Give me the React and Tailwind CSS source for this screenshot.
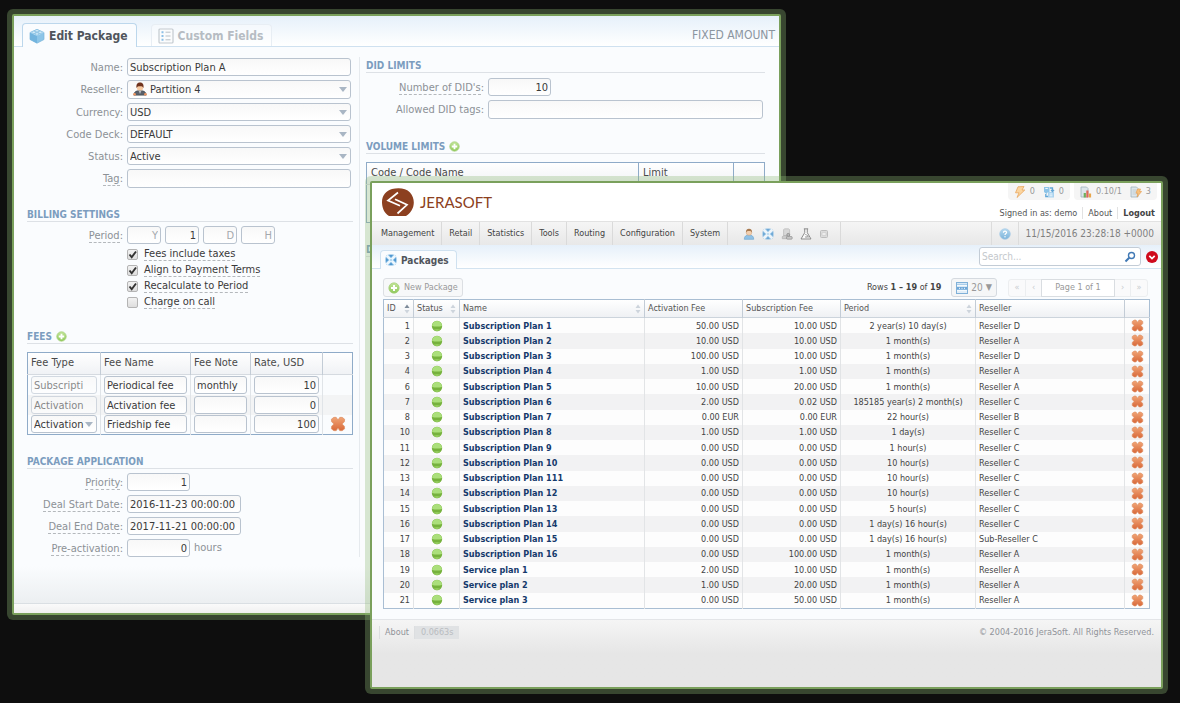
import { useState } from 'react'
import clsx from 'clsx'

const packages = [
  [1, 'Subscription Plan 1', '50.00 USD', '10.00 USD', '2 year(s) 10 day(s)', 'Reseller D'],
  [2, 'Subscription Plan 2', '10.00 USD', '10.00 USD', '1 month(s)', 'Reseller A'],
  [3, 'Subscription Plan 3', '100.00 USD', '10.00 USD', '1 month(s)', 'Reseller D'],
  [4, 'Subscription Plan 4', '1.00 USD', '1.00 USD', '1 month(s)', 'Reseller A'],
  [6, 'Subscription Plan 5', '10.00 USD', '20.00 USD', '1 month(s)', 'Reseller A'],
  [7, 'Subscription Plan 6', '2.00 USD', '0.02 USD', '185185 year(s) 2 month(s)', 'Reseller C'],
  [8, 'Subscription Plan 7', '0.00 EUR', '0.00 EUR', '22 hour(s)', 'Reseller B'],
  [10, 'Subscription Plan 8', '1.00 USD', '1.00 USD', '1 day(s)', 'Reseller C'],
  [11, 'Subscription Plan 9', '0.00 USD', '0.00 USD', '1 hour(s)', 'Reseller C'],
  [12, 'Subscription Plan 10', '0.00 USD', '0.00 USD', '10 hour(s)', 'Reseller C'],
  [13, 'Subscription Plan 111', '0.00 USD', '0.00 USD', '10 hour(s)', 'Reseller C'],
  [14, 'Subscription Plan 12', '0.00 USD', '0.00 USD', '10 hour(s)', 'Reseller C'],
  [15, 'Subscription Plan 13', '0.00 USD', '0.00 USD', '5 hour(s)', 'Reseller C'],
  [16, 'Subscription Plan 14', '0.00 USD', '0.00 USD', '1 day(s) 16 hour(s)', 'Reseller C'],
  [17, 'Subscription Plan 15', '0.00 USD', '0.00 USD', '1 day(s) 16 hour(s)', 'Sub-Reseller C'],
  [18, 'Subscription Plan 16', '0.00 USD', '100.00 USD', '1 month(s)', 'Reseller A'],
  [19, 'Service plan 1', '2.00 USD', '10.00 USD', '1 month(s)', 'Reseller A'],
  [20, 'Service plan 2', '1.00 USD', '20.00 USD', '1 month(s)', 'Reseller A'],
  [21, 'Service plan 3', '0.00 USD', '50.00 USD', '1 month(s)', 'Reseller A'],
]

const menu = ['Management', 'Retail', 'Statistics', 'Tools', 'Routing', 'Configuration', 'System']

/* ---------- icons ---------- */

// gradients shared by all the icons
function IconDefs() {
  return (
    <svg className="absolute h-0 w-0" aria-hidden="true">
      <defs>
        <linearGradient id="orange" x1="0" y1="0" x2="0" y2="1">
          <stop offset="0" stopColor="#f0a475" />
          <stop offset="1" stopColor="#d9693a" />
        </linearGradient>
        <linearGradient id="lime" x1="0" y1="0" x2="0" y2="1">
          <stop offset="0" stopColor="#c3e59a" />
          <stop offset="1" stopColor="#8fc95a" />
        </linearGradient>
        <linearGradient id="sky" x1="0" y1="0" x2="0" y2="1">
          <stop offset="0" stopColor="#b4d9f0" />
          <stop offset="1" stopColor="#7db4da" />
        </linearGradient>
      </defs>
    </svg>
  )
}

function DeleteIcon({ className }) {
  return (
    <svg viewBox="0 0 14 14" className={className}>
      <path
        d="M3.4 1.2 5.4 1.200 7 3.600 8.600 1.200 10.600 1.200 12.800 2.800 12.600 5 10.600 7 12.600 9 12.800 11.200 10.600 12.800 8.600 12.800 7 10.600 5.400 12.800 3.400 12.800 1.200 11.200 1.400 9 3.400 7 1.400 5 1.200 2.800Z"
        fill="url(#orange)"
        stroke="#e0946b"
        strokeWidth="0.7"
        strokeLinejoin="round"
      />
    </svg>
  )
}

function PlusIcon({ className }) {
  return (
    <svg viewBox="0 0 12 12" className={className}>
      <circle cx="6" cy="6" r="5.2" fill="url(#lime)" stroke="#a3cf77" strokeWidth="0.7" />
      <path d="M6 3v6M3 6h6" stroke="#fff" strokeWidth="2" />
    </svg>
  )
}

function BrickIcon({ className }) {
  return (
    <svg viewBox="0 0 16 16" className={className}>
      <path d="M1 4.500 8 1.500l7 3v7L8 15.200 1 11.500Z" fill="#8cc5e8" stroke="#7ab4da" strokeWidth="0.7" />
      <path d="M1 4.500 8 8v7.200L1 11.500Z" fill="#72b4de" />
      <path d="M1 4.500 8 1.500l7 3L8 8Z" fill="#b5dcf3" />
      <ellipse cx="4.800" cy="4.300" rx="1.900" ry="1.200" fill="#d4ecf9" stroke="#77b5dc" strokeWidth="0.6" />
      <ellipse cx="8" cy="2.700" rx="1.900" ry="1.200" fill="#d4ecf9" stroke="#77b5dc" strokeWidth="0.6" />
      <ellipse cx="11.200" cy="4.300" rx="1.900" ry="1.200" fill="#d4ecf9" stroke="#77b5dc" strokeWidth="0.6" />
      <ellipse cx="8" cy="5.900" rx="1.900" ry="1.200" fill="#d4ecf9" stroke="#77b5dc" strokeWidth="0.6" />
    </svg>
  )
}

function ListIcon({ className }) {
  return (
    <svg viewBox="0 0 16 16" className={className}>
      <rect x="1" y="1" width="14" height="14" rx="1" fill="#fbfcfd" stroke="#c4cad0" strokeWidth="1.2" />
      <path d="M3.5 4.2h2M3.5 8h2M3.5 11.8h2" stroke="#8dbfe6" strokeWidth="2" />
      <path d="M7.5 4.2h5M7.5 8h5M7.5 11.8h5" stroke="#b9c0c7" strokeWidth="1" />
    </svg>
  )
}

function ManagerIcon({ className }) {
  return (
    <svg viewBox="0 0 14 14" className={className}>
      <path d="M.8 13.2C.8 10 3 8.6 7 8.6s6.2 1.4 6.2 4.6Z" fill="#59606a" stroke="#3c424b" strokeWidth="0.5" />
      <path d="M5.6 8.8 7 12l1.4-3.2Z" fill="#b9bec4" />
      <circle cx="1.6" cy="12.3" r="1.3" fill="#ee9560" />
      <circle cx="12.4" cy="12.3" r="1.3" fill="#ee9560" />
      <circle cx="7" cy="5.4" r="3.2" fill="#f5c9a2" />
      <path d="M3.500 6C3 2.400 4.600.600 7 .600s4 1.800 3.500 5.400C9.800 4.600 9 4.200 7 4.200s-2.800.400-3.500 1.800Z" fill="#70331d" />
    </svg>
  )
}

function UserIcon({ className }) {
  return (
    <svg viewBox="0 0 14 14" className={className}>
      <path d="M1.500 13.200C1.500 9.600 3.500 8.200 7 8.200s5.500 1.400 5.500 5Z" fill="#8fc1e6" stroke="#6fa8d2" strokeWidth="0.8" />
      <circle cx="7" cy="5.200" r="3.300" fill="#f3cfae" stroke="#c79b74" strokeWidth="0.500" />
      <path d="M3.500 5.400C3.200 2.400 4.600.800 7 .800s3.800 1.600 3.500 4.600C9.600 3.800 8.800 3.500 7 3.500s-2.600.300-3.500 1.900Z" fill="#a8794f" />
    </svg>
  )
}

function PackageIcon({ className }) {
  return (
    <svg viewBox="0 0 14 14" className={className}>
      <rect x="0.800" y="0.800" width="12.400" height="12.400" rx="4.500" fill="#8fc3e9" stroke="#8bbce0" strokeWidth="0.7" />
      <path d="m2 2 10 10M12 2 2 12" stroke="#eef7fd" strokeWidth="3" />
      <path d="M4.800 1.200h4.400L7 4.200ZM4.800 12.800h4.400L7 9.800ZM1.200 4.800v4.400L4.200 7ZM12.800 4.800v4.400L9.800 7Z" fill="#4f97cf" />
      <circle cx="7" cy="7" r="1.500" fill="#b5d9f2" />
    </svg>
  )
}

function ServerIcon({ className }) {
  return (
    <svg viewBox="0 0 14 14" className={className}>
      <path d="M4 1h5l1 1v7H3V2Z" fill="#d8d8d8" stroke="#b0b0b0" strokeWidth="0.7" />
      <path d="M1.500 12.500V10l2-1h3v3.500Z" fill="#cdcdcd" stroke="#a8a8a8" strokeWidth="0.7" />
      <circle cx="8.500" cy="8" r="1.700" fill="#bbb" stroke="#8b8b8b" />
      <rect x="6.500" y="10" width="6.500" height="3" rx="0.800" fill="#c9c9c9" stroke="#8b8b8b" strokeWidth="0.8" />
    </svg>
  )
}

function FlaskIcon({ className }) {
  return (
    <svg viewBox="0 0 14 14" className={className}>
      <path d="M4.500 1h5M5.500 1v4.500L1.200 12.800h11.600L8.500 5.500V1" fill="#fafafa" stroke="#7c7c7c" />
      <path d="m6.500 7 1 1.500M6 10.500h3M8.500 8.500l1.500 2.500" stroke="#777" />
    </svg>
  )
}

function BoxIcon({ className }) {
  return (
    <svg viewBox="0 0 10 10" className={className}>
      <rect x="1.500" y="1.500" width="7" height="7" rx="1" fill="#dcdcdc" stroke="#bdbdbd" />
      <rect x="3" y="4" width="4" height="2" fill="#fff" stroke="#c2c2c2" strokeWidth="0.6" />
    </svg>
  )
}

function BoltIcon({ className }) {
  return (
    <svg viewBox="0 0 12 12" className={className}>
      <path d="M4 .800 10 .500 8 4h2.800L3 11.500 5 6.800H1.500Z" fill="#fbd5a0" stroke="#e8a75e" strokeWidth="0.8" />
    </svg>
  )
}

function SyncIcon({ className }) {
  return (
    <svg viewBox="0 0 12 12" className={className}>
      <path d="M1 1h5.500v5H5L3.500 8 1 6Z" fill="#8dc4e8" />
      <path d="M5 6h6v5.500H5Z" fill="#a9d2ee" />
      <path d="M7 2h2.500v2.500M8 4l1.500 1.500L11 4M5 10.500H2.800V8" fill="none" stroke="#62a6d6" strokeWidth="1.300" />
      <path d="M2.300 2.500h2.500M6.500 8h3M6.500 9.800h3" stroke="#eef7fd" />
    </svg>
  )
}

function ChartIcon({ className }) {
  return (
    <svg viewBox="0 0 12 12" className={className}>
      <path d="M1 11V1h5.500l1.500 1.500V11Z" fill="#dde6ec" stroke="#9fb2bf" strokeWidth="0.8" />
      <path d="M4.800 11.500V7" stroke="#6fae5b" strokeWidth="2.200" />
      <path d="M7.400 11.500V4.500" stroke="#e0685a" strokeWidth="2.200" />
      <path d="M10 11.500V7.500" stroke="#e9a64a" strokeWidth="2.200" />
    </svg>
  )
}

function PageBoltIcon({ className }) {
  return (
    <svg viewBox="0 0 12 12" className={className}>
      <path d="M1 11V1h5.500L8 2.500V11Z" fill="#dde6ec" stroke="#9fb2bf" strokeWidth="0.8" />
      <path d="M2.500 4h4M2.500 6h4M2.500 8h4" stroke="#b3c2cc" strokeWidth="0.7" />
      <path d="M7.500 3h3L9.600 5.500h2L7 11l.8-3.800H6Z" fill="#f8c27e" stroke="#e69b4c" strokeWidth="0.6" />
    </svg>
  )
}

function HelpIcon({ className }) {
  return (
    <svg viewBox="0 0 12 12" className={className}>
      <circle cx="6" cy="6" r="5.300" fill="url(#sky)" stroke="#a9cce6" strokeWidth="0.7" />
      <path d="M4.400 4.700c0-2 3.200-2 3.200-.2C7.600 5.600 6 5.600 6 7" fill="none" stroke="#fff" strokeWidth="1.200" />
      <circle cx="6" cy="8.800" r="0.700" fill="#fff" />
    </svg>
  )
}

function RowsIcon({ className }) {
  return (
    <svg viewBox="0 0 12 12" className={className}>
      <rect x="0.500" y="0.500" width="11" height="11" fill="#f3f9fd" stroke="#7fb0d8" />
      <path d="M1 2.300h10" stroke="#a9cdea" strokeWidth="1.400" />
      <path d="M1 6.300h10" stroke="#6ea7d8" strokeWidth="3" />
      <path d="M3 6.300h1M5.500 6.300h1M8 6.300h1" stroke="#fff" />
      <path d="M1 10h10" stroke="#cfe2f2" />
    </svg>
  )
}

function StatusDot() {
  return (
    <svg viewBox="0 0 12 12" className="mx-auto h-3 w-3">
      <circle cx="6" cy="6" r="5.200" fill="#76b23d" />
      <path d="M1 6a5 5 0 0 1 10 0Q6 7 1 6Z" fill="#abdf7b" />
      <path d="M2.600 9.600a5 5 0 0 0 6.800 0Q6 8.400 2.600 9.600Z" fill="#92cb5b" />
    </svg>
  )
}

function SortArrows({ active }) {
  return (
    <svg viewBox="0 0 6 10" className="h-2.5 w-1.5 shrink-0">
      <path d="M3 .5 5.500 4h-5Z" fill={active ? '#7d8a99' : '#cdd4dc'} />
      <path d="M3 9.500.5 6h5Z" fill="#cdd4dc" />
    </svg>
  )
}

function Logo() {
  return (
    <svg viewBox="0 0 32 28" className="h-7 w-8">
      <path d="M10 1C16-.4 24-.2 28 4.500c4.500 5 5 12.500 1.500 18C28 25 26 27 24 28H7C2 25 0 19.500 0 14 0 7 4.500 2.500 10 1Z" fill="#8c4020" />
      <path d="M16 4.500 6 12.500 18 17.800M13 11.200 25 16.800 15.500 25.500" fill="none" stroke="#fff" strokeWidth="1.700" />
    </svg>
  )
}

/* ---------- form parts ---------- */

const fieldClass =
  'min-w-0 rounded-[3px] border border-[#b9c3cf] bg-linear-to-b from-[#f8f8f8] to-white px-0.5 pt-px text-[11px] text-[#3a3a3a] outline-none placeholder:text-[#a4a9ae]'

function Field({ tall, right, className, ...props }) {
  return (
    <input
      className={clsx(fieldClass, tall ? 'h-[19px]' : 'h-[18px]', right && 'text-right', className)}
      {...props}
    />
  )
}

function Select({ tall, className, icon, children, ...props }) {
  return (
    <span className={clsx('relative flex', className)}>
      {icon}
      <select
        className={clsx(fieldClass, 'w-full appearance-none', tall ? 'h-[19px]' : 'h-[18px]', icon && 'pl-[22px]')}
        {...props}
      >
        {children}
      </select>
      <svg viewBox="0 0 8 5" className="pointer-events-none absolute top-[7px] right-1 h-[5px] w-2">
        <path d="M0 0h8L4 5Z" fill="#a9b6c4" />
      </svg>
    </span>
  )
}

function Row({ id, label, hint, children }) {
  return (
    <div className="col-span-2 grid grid-cols-subgrid items-center">
      <label htmlFor={id} className="pt-px text-right leading-[14px] whitespace-nowrap text-[#8c9196]">
        <span className={clsx(hint && 'border-b border-dashed border-[#b4b8bc]')}>{label}</span>:
      </label>
      <div className="flex items-center gap-1">{children}</div>
    </div>
  )
}

function Heading({ children }) {
  return (
    <h2 className="flex h-4 items-center gap-1 border-b border-[#dde1e6] pt-0.5 text-[10px] font-bold text-[#7c9dbf]">
      {children}
    </h2>
  )
}

function AddButton({ label }) {
  return (
    <button aria-label={label}>
      <PlusIcon className="h-[11px] w-[11px]" />
    </button>
  )
}

function Check({ label, defaultChecked }) {
  return (
    <label className="flex h-4 items-center gap-1.5 text-[#3a3a3a]">
      <span className="relative flex">
        <input
          type="checkbox"
          defaultChecked={defaultChecked}
          className="peer h-[11px] w-[11px] appearance-none rounded-[2px] border border-[#b4b4b4] bg-linear-to-b from-[#f2f2f2] to-[#dedede]"
        />
        <svg viewBox="0 0 11 11" className="pointer-events-none absolute inset-0 hidden h-[11px] w-[11px] peer-checked:block">
          <path d="m2.500 5.500 2.200 2.700L9 2.500" fill="none" stroke="#333" strokeWidth="1.900" />
        </svg>
      </span>
      <span className="border-b border-dashed border-[#b4b8bc] leading-[13px]">{label}</span>
    </label>
  )
}

/* ---------- windows ---------- */

const windowClass =
  'absolute flex flex-col border-2 border-[#7aa05c] bg-[#fafcfe] shadow-[0_0_0_5px_rgba(143,186,118,0.33)]'

function FeesTable() {
  const th = 'border-r border-[#c3ccd6] px-[3px] text-left font-normal'
  const td = 'border-r border-[#e0e4e8] px-[3px]'
  return (
    <table className="mt-2 w-full table-fixed border-collapse border border-[#8fabc8] text-[#4a4a4a]">
      <thead>
        <tr className="h-[22px] border-b border-[#d5dae0] bg-linear-to-b from-white to-[#f0f2f5]">
          <th className={clsx(th, 'w-[73px]')}>Fee Type</th>
          <th className={th}>Fee Name</th>
          <th className={clsx(th, 'w-[60px]')}>Fee Note</th>
          <th className={clsx(th, 'w-[72px]')}>Rate, USD</th>
          <th className="w-[30px]" />
        </tr>
      </thead>
      <tbody>
        {[
          ['Subscripti', 'Periodical fee', 'monthly', '10'],
          ['Activation', 'Activation fee', '', '0'],
          ['Activation', 'Friedship fee', '', '100'],
        ].map(([type, name, note, rate], i) => (
          <tr key={name} className="h-5 even:bg-[#f3f4f5]">
            <td className={td}>
              {i === 2 ? (
                <Select aria-label="Fee type">
                  <option>{type}</option>
                </Select>
              ) : (
                <Field className="block w-full opacity-60" disabled aria-label="Fee type" defaultValue={type} />
              )}
            </td>
            <td className={td}>
              <Field className="block w-full" aria-label="Fee name" defaultValue={name} />
            </td>
            <td className={td}>
              <Field className="block w-full" aria-label="Fee note" defaultValue={note} />
            </td>
            <td className={td}>
              <Field className="block w-full" right aria-label="Rate" defaultValue={rate} />
            </td>
            <td>
              {i === 2 && (
                <button className="mx-auto block" aria-label="Delete fee">
                  <DeleteIcon className="h-4 w-4" />
                </button>
              )}
            </td>
          </tr>
        ))}
      </tbody>
    </table>
  )
}

function EditWindow() {
  return (
    <section className={clsx(windowClass, 'top-3.5 right-[399px] left-3 rounded-[2px] text-[11px]')}>
      <header className="flex h-[31px] items-end border-b border-[#cfe1f0] bg-linear-to-b from-[#e6f0fa] to-white pl-2">
        <a
          href="#edit"
          className="-mb-px flex h-6 items-center gap-1 rounded-t border border-b-0 border-[#bcd7ec] bg-[#fafcfe] pr-2 pl-1.5 text-[12px] font-bold text-[#50555c]"
        >
          <BrickIcon className="h-4 w-4" />
          Edit Package
        </a>
        <a
          href="#custom"
          className="ml-3.5 flex h-[22px] items-center gap-1 rounded-t border border-b-0 border-[#e8eef4] bg-white/40 pr-2 pl-1.5 text-[12px] font-bold text-[#b6bcc3]"
        >
          <ListIcon className="h-4 w-4" />
          Custom Fields
        </a>
        <span className="mr-1 mb-0.5 ml-auto text-[12px] text-[#8b959f]">FIXED AMOUNT</span>
      </header>

      <div className="grid grid-cols-[346px_1fr] pt-2.5">
        <div className="border-r border-[#e6eaee] pr-1.5 pl-[13px]">
          <div className="grid grid-cols-[96px_1fr] gap-1 pt-px pr-0.5">
            <Row id="name" label="Name">
              <Field id="name" className="flex-1" defaultValue="Subscription Plan A" />
            </Row>
            <Row id="reseller" label="Reseller">
              <Select
                id="reseller"
                tall
                className="flex-1"
                icon={<ManagerIcon className="pointer-events-none absolute top-0.5 left-1.5 h-3.5 w-3.5" />}
              >
                <option>Partition 4</option>
              </Select>
            </Row>
            <Row id="currency" label="Currency">
              <Select id="currency" className="flex-1">
                <option>USD</option>
              </Select>
            </Row>
            <Row id="deck" label="Code Deck">
              <Select id="deck" className="flex-1">
                <option>DEFAULT</option>
              </Select>
            </Row>
            <Row id="status" label="Status">
              <Select id="status" className="flex-1">
                <option>Active</option>
              </Select>
            </Row>
            <Row id="tag" label="Tag" hint>
              <Field id="tag" tall className="flex-1" />
            </Row>
          </div>

          <div className="mt-[18px]">
            <Heading>BILLING SETTINGS</Heading>
            <div className="mt-1 grid grid-cols-[96px_1fr] gap-x-1 gap-y-0.5">
              <Row id="years" label="Period" hint>
                <Field id="years" right className="w-[34px]" placeholder="Y" />
                <Field right className="w-[34px]" aria-label="Months" defaultValue="1" />
                <Field right className="w-[34px]" aria-label="Days" placeholder="D" />
                <Field right className="w-[34px]" aria-label="Hours" placeholder="H" />
              </Row>
              <div className="col-start-2">
                <Check label="Fees include taxes" defaultChecked />
                <Check label="Align to Payment Terms" defaultChecked />
                <Check label="Recalculate to Period" defaultChecked />
                <Check label="Charge on call" />
              </div>
            </div>
          </div>

          <div className="mt-[18px]">
            <Heading>
              FEES <AddButton label="Add fee" />
            </Heading>
            <FeesTable />
          </div>

          <div className="mt-[18px]">
            <Heading>PACKAGE APPLICATION</Heading>
            <div className="mt-1 grid grid-cols-[96px_1fr] gap-1">
              <Row id="priority" label="Priority" hint>
                <Field id="priority" right className="w-[63px]" defaultValue="1" />
              </Row>
              <Row id="start" label="Deal Start Date" hint>
                <Field id="start" className="w-[114px]" defaultValue="2016-11-23 00:00:00" />
              </Row>
              <Row id="end" label="Deal End Date" hint>
                <Field id="end" className="w-[114px]" defaultValue="2017-11-21 00:00:00" />
              </Row>
              <Row id="pre" label="Pre-activation" hint>
                <Field id="pre" right className="w-[63px]" defaultValue="0" />
                <span className="text-[#8c9196]">hours</span>
              </Row>
            </div>
          </div>
        </div>

        <div className="pr-3.5 pl-1.5">
          <Heading>DID LIMITS</Heading>
          <div className="mt-[5px] grid grid-cols-[118px_1fr] gap-1 pr-0.5">
            <Row id="dids" label="Number of DID's" hint>
              <Field id="dids" right className="w-[63px]" defaultValue="10" />
            </Row>
            <Row id="tags" label="Allowed DID tags">
              <Field id="tags" tall className="flex-1" />
            </Row>
          </div>
          <div className="mt-[19px]">
            <Heading>
              VOLUME LIMITS <AddButton label="Add volume limit" />
            </Heading>
            <table className="mt-2 w-full table-fixed border-collapse border border-[#8fabc8] text-[#4a4a4a]">
              <thead>
                <tr className="h-[22px] border-b border-[#d5dae0] bg-linear-to-b from-white to-[#f0f2f5]">
                  <th className="border-r border-[#8fabc8] px-1 text-left font-normal">Code / Code Name</th>
                  <th className="w-[95px] border-r border-[#8fabc8] px-1 text-left font-normal">Limit</th>
                  <th className="w-[31px]" />
                </tr>
              </thead>
              <tbody>
                <tr className="h-[38px]">
                  <td colSpan={3} />
                </tr>
              </tbody>
            </table>
          </div>
          <div className="mt-[18px]">
            <Heading>D</Heading>
          </div>
        </div>
      </div>

      <div className="h-[46px] bg-linear-to-b from-[#fafcfe] from-20% to-[#eceff1]" />
      <div className="h-2.5 border-t border-[#dadfe3] bg-linear-to-b from-[#fafafa] to-[#f0f0f0]" />
    </section>
  )
}

function PackagesTable() {
  const th = 'border-r border-[#c3ccd6] px-[3px] text-left font-normal'
  const td = 'border-r border-[#e2e4e6] px-[3px]'
  return (
    <table className="mt-0.5 h-[310px] w-full table-fixed border-collapse border border-[#a9bed3] text-[#444]">
      <thead>
        <tr className="h-[18px] border-b border-[#ccd4dc] bg-linear-to-b from-white to-[#eff1f4] text-[#555]">
          <th className={clsx(th, 'w-[30px]')}>
            <span className="flex items-center justify-between">
              ID <SortArrows active />
            </span>
          </th>
          <th className={clsx(th, 'w-[46px]')}>
            <span className="flex items-center justify-between">
              Status <SortArrows />
            </span>
          </th>
          <th className={th}>
            <span className="flex items-center justify-between">
              Name <SortArrows />
            </span>
          </th>
          <th className={clsx(th, 'w-[98px]')}>Activation Fee</th>
          <th className={clsx(th, 'w-[98px]')}>Subscription Fee</th>
          <th className={clsx(th, 'w-[135px]')}>
            <span className="flex items-center justify-between">
              Period <SortArrows />
            </span>
          </th>
          <th className={clsx(th, 'w-[149px]')}>Reseller</th>
          <th className="w-[25px]" />
        </tr>
      </thead>
      <tbody>
        {packages.map(([id, name, activation, subscription, period, reseller]) => (
          <tr key={id} className="leading-[14px] odd:bg-[#fdfdfd] even:bg-[#f2f2f3]">
            <td className={clsx(td, 'text-right')}>{id}</td>
            <td className={td}>
              <StatusDot />
            </td>
            <td className={td}>
              <a href="#package" className="font-bold text-[#14396b]">
                {name}
              </a>
            </td>
            <td className={clsx(td, 'text-right')}>{activation}</td>
            <td className={clsx(td, 'text-right')}>{subscription}</td>
            <td className={clsx(td, 'text-center')}>{period}</td>
            <td className={td}>{reseller}</td>
            <td>
              <button className="mx-auto block" aria-label="Delete package">
                <DeleteIcon className="h-[13px] w-[13px]" />
              </button>
            </td>
          </tr>
        ))}
      </tbody>
    </table>
  )
}

function PackagesWindow() {
  const [query, setQuery] = useState('')

  return (
    <section className={clsx(windowClass, 'top-[181px] right-[17px] left-[370px] rounded-[2px] text-[9px]')}>
      <header className="flex h-[38px] justify-between bg-white pr-1 pl-2.5">
        <div className="flex items-center gap-1.5">
          <Logo />
          <span className="font-['Lato',sans-serif] text-[15px] text-[#8c4020]">JERASOFT</span>
        </div>
        <div className="flex flex-col items-end text-[#555]">
          <div className="flex gap-1 text-[#999]">
            <span className="flex h-[17px] items-center gap-1 rounded-b bg-[#f5f5f5] px-1.5">
              <BoltIcon className="h-3 w-3" />
              <span className="mr-1">0</span>
              <SyncIcon className="h-3 w-3" />
              <span>0</span>
            </span>
            <span className="flex h-[17px] items-center gap-1 rounded-b bg-[#f5f5f5] px-1.5">
              <ChartIcon className="h-3 w-3" />
              <span className="mr-1">0.10/1</span>
              <PageBoltIcon className="h-3 w-3" />
              <span>3</span>
            </span>
          </div>
          <div className="mt-[7px] mr-0.5 flex items-center leading-3">
            <span className="pr-[5px]">Signed in as: demo</span>
            <a href="#about" className="border-x border-[#e2e2e2] px-[5px]">
              About
            </a>
            <a href="#logout" className="pl-[5px] font-bold text-[#444]">
              Logout
            </a>
          </div>
        </div>
      </header>

      <nav className="flex h-6 items-stretch border-t border-[#e2e2e2] bg-linear-to-b from-[#f5f5f5] to-[#e8e8e8] pl-0.5 text-[#444]">
        {menu.map((item) => (
          <a key={item} href="#menu" className="flex items-center border-r border-[#dadada] px-[7px]">
            {item}
          </a>
        ))}
        <span className="flex items-center gap-[7px] border-r border-[#dadada] pr-[11px] pl-[15px]">
          <UserIcon className="h-3 w-3" />
          <PackageIcon className="h-3 w-3 opacity-80" />
          <ServerIcon className="h-3 w-3" />
          <FlaskIcon className="h-3 w-3" />
          <BoxIcon className="h-2.5 w-2.5" />
        </span>
        <a href="#help" aria-label="Help" className="ml-auto flex items-center border-x border-[#dcdcdc] px-[7px]">
          <HelpIcon className="h-3 w-3" />
        </a>
        <span className="flex items-center px-[7px] text-[10px] text-[#7f7f7f]">11/15/2016 23:28:18 +0000</span>
      </nav>

      <div className="flex h-6 items-end border-b border-[#d3e3f0] bg-linear-to-b from-[#e6f0fa] to-white pl-2">
        <a
          href="#packages"
          className="-mb-px flex h-[19px] items-center gap-1 rounded-t border border-b-0 border-[#cfe1f0] bg-[#fafcfe] px-1 pr-[7px] text-[10px] font-bold text-[#50555c]"
        >
          <PackageIcon className="h-3 w-3" />
          Packages
        </a>
        <div className="mr-[3px] mb-0.5 ml-auto flex items-center gap-[5px]">
          <label className="flex h-[19px] w-[162px] items-center rounded-[3px] border border-[#c3ccd6] bg-white px-0.5">
            <input
              value={query}
              onChange={(e) => setQuery(e.target.value)}
              aria-label="Search"
              placeholder="Search..."
              className="min-w-0 flex-1 text-[10px] outline-none placeholder:text-[#c4c8cc]"
            />
            <svg viewBox="0 0 12 12" className="mr-0.5 h-3 w-3">
              <circle cx="7.500" cy="4.500" r="3" fill="none" stroke="#4179b5" strokeWidth="1.400" />
              <path d="M5.200 6.800 1.500 10.500" stroke="#4179b5" strokeWidth="2" />
            </svg>
          </label>
          <button aria-label="More filters">
            <svg viewBox="0 0 12 12" className="h-3 w-3">
              <circle cx="6" cy="6" r="6" fill="#cf0a1c" />
              <path d="m3.300 4.800 2.700 2.700 2.700-2.700" fill="none" stroke="#fff" strokeWidth="1.700" />
            </svg>
          </button>
        </div>
      </div>

      <main className="px-[11px] pt-[9px] pb-2.5">
        <div className="flex h-[19px] items-center">
          <button className="flex h-[19px] items-center gap-1 rounded-[3px] border border-[#dcdfe3] bg-[#f7f8f9] px-1 text-[#999]">
            <PlusIcon className="h-3 w-3" />
            New Package
          </button>
          <span className="mr-2.5 ml-auto text-[#444]">
            Rows <b>1 – 19</b> of <b>19</b>
          </span>
          <button className="flex h-[19px] items-center gap-[3px] rounded-[3px] border border-[#d5dae0] bg-[#f5f6f7] px-1 text-[#999]">
            <RowsIcon className="h-3 w-3" />
            <span className="text-[10px]">20</span>
            <span>▼</span>
          </button>
          <div className="mr-0.5 ml-[11px] flex h-[18px] items-stretch rounded-[3px] border border-[#eceef0] bg-[#fafafb] text-[#c8ccd0]">
            <button className="w-4" aria-label="First page">«</button>
            <button className="w-4 border-l border-[#eceef0]" aria-label="Previous page">‹</button>
            <span className="-my-px flex w-[74px] items-center justify-center border border-[#d9dde1] bg-white text-[#999]">
              Page 1 of 1
            </span>
            <button className="w-4 border-r border-[#eceef0]" aria-label="Next page">›</button>
            <button className="w-4" aria-label="Last page">»</button>
          </div>
        </div>
        <PackagesTable />
      </main>

      <footer className="flex h-[68px] items-start justify-between border-t border-[#e3e5e8] bg-linear-to-b from-[#f5f5f5] to-[#e6e6e6] to-50% px-[7px] pt-1.5 text-[#909399]">
        <div className="flex h-[13px] items-center">
          <a href="#about" className="border-x border-[#dcdee0] px-[5px]">
            About
          </a>
          <span className="bg-[#e0e2e4] px-1.5 leading-[13px] text-[#b9bcc0]">0.0663s</span>
        </div>
        <span className="leading-3">© 2004-2016 JeraSoft. All Rights Reserved.</span>
      </footer>
    </section>
  )
}

export default function App() {
  return (
    <div className="relative min-h-screen overflow-hidden bg-[#0e0e0e] font-['DejaVu_Sans_Condensed','DejaVu_Sans',Tahoma,sans-serif]">
      <IconDefs />
      <EditWindow />
      <PackagesWindow />
    </div>
  )
}
